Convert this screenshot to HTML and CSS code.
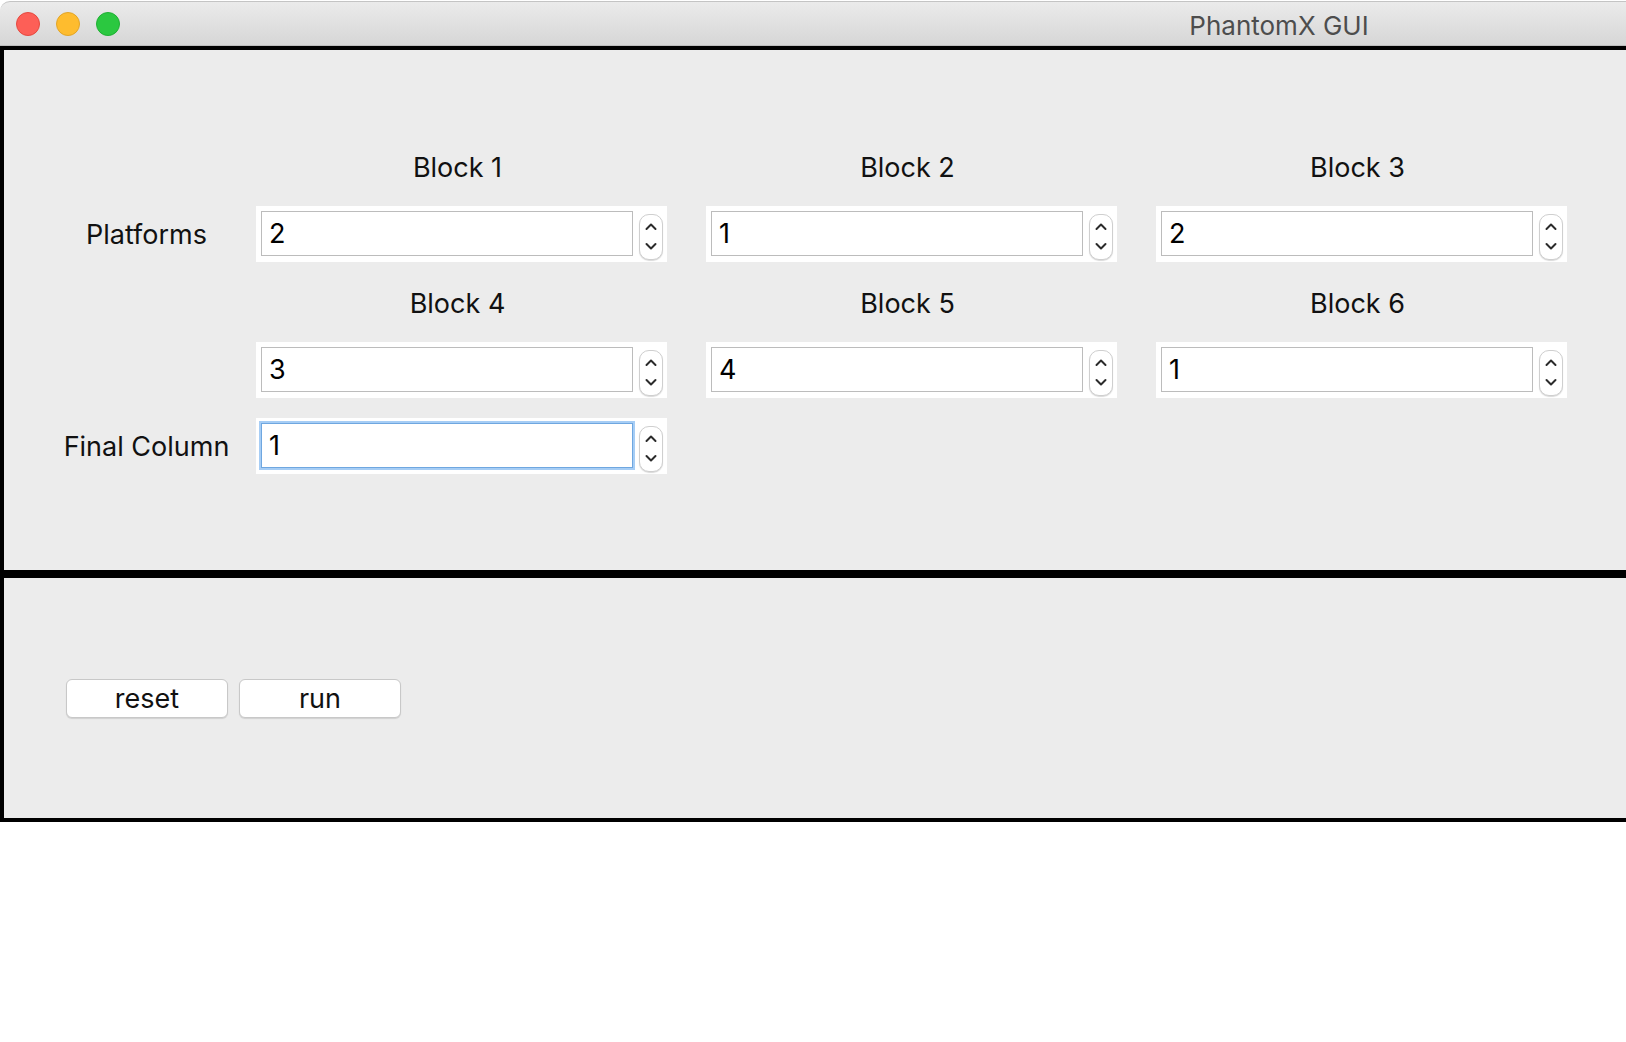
FILE: index.html
```html
<!DOCTYPE html>
<html>
<head>
<meta charset="utf-8">
<title>PhantomX GUI</title>
<link rel="stylesheet" href="styles.css">
</head>
<body>
<div class="window">
  <div class="titlebar">
    <div class="lights">
      <span class="light red"></span>
      <span class="light yellow"></span>
      <span class="light green"></span>
    </div>
    <div class="title">PhantomX GUI</div>
  </div>
  <div class="frame frame-top">
    <div class="grid">
      <div class="cell"></div>
      <div class="block-label">Block 1</div>
      <div class="block-label">Block 2</div>
      <div class="block-label">Block 3</div>

      <div class="row-label">Platforms</div>
      <div class="spin"><div class="field">2</div><div class="arrows"><svg width="24" height="46" viewBox="0 0 24 46"><path d="M7.5 15 L12 10.5 L16.5 15" /><path d="M7.5 30 L12 34.5 L16.5 30" /></svg></div></div>
      <div class="spin"><div class="field">1</div><div class="arrows"><svg width="24" height="46" viewBox="0 0 24 46"><path d="M7.5 15 L12 10.5 L16.5 15" /><path d="M7.5 30 L12 34.5 L16.5 30" /></svg></div></div>
      <div class="spin"><div class="field">2</div><div class="arrows"><svg width="24" height="46" viewBox="0 0 24 46"><path d="M7.5 15 L12 10.5 L16.5 15" /><path d="M7.5 30 L12 34.5 L16.5 30" /></svg></div></div>

      <div class="cell"></div>
      <div class="block-label">Block 4</div>
      <div class="block-label">Block 5</div>
      <div class="block-label">Block 6</div>

      <div class="cell"></div>
      <div class="spin"><div class="field">3</div><div class="arrows"><svg width="24" height="46" viewBox="0 0 24 46"><path d="M7.5 15 L12 10.5 L16.5 15" /><path d="M7.5 30 L12 34.5 L16.5 30" /></svg></div></div>
      <div class="spin"><div class="field">4</div><div class="arrows"><svg width="24" height="46" viewBox="0 0 24 46"><path d="M7.5 15 L12 10.5 L16.5 15" /><path d="M7.5 30 L12 34.5 L16.5 30" /></svg></div></div>
      <div class="spin"><div class="field">1</div><div class="arrows"><svg width="24" height="46" viewBox="0 0 24 46"><path d="M7.5 15 L12 10.5 L16.5 15" /><path d="M7.5 30 L12 34.5 L16.5 30" /></svg></div></div>

      <div class="spacer"></div>

      <div class="row-label">Final Column</div>
      <div class="spin"><div class="field focused">1</div><div class="arrows"><svg width="24" height="46" viewBox="0 0 24 46"><path d="M7.5 15 L12 10.5 L16.5 15" /><path d="M7.5 30 L12 34.5 L16.5 30" /></svg></div></div>
    </div>
  </div>
  <div class="frame frame-bottom">
    <div class="buttons">
      <button class="btn">reset</button>
      <button class="btn">run</button>
    </div>
  </div>
</div>
</body>
</html>
```

FILE: styles.css
```css
html, body {
  margin: 0;
  padding: 0;
  background: #ffffff;
  overflow: hidden;
  width: 1626px;
  height: 1042px;
}

.window {
  width: 2558px;
  margin-top: 1px;
  font-family: Inter, "Noto Sans", sans-serif;
  color: #111;
}

.titlebar {
  height: 43px;
  border-top: 1px solid #c4c4c4;
  border-bottom: 1px solid #bdbdbd;
  border-radius: 10px 10px 0 0;
  background: linear-gradient(#ebebeb, #d6d6d6);
  display: flex;
  align-items: center;
  position: relative;
}

.lights {
  display: flex;
  gap: 16px;
  padding-left: 16px;
}

.light {
  width: 24px;
  height: 24px;
  box-sizing: border-box;
  border-radius: 50%;
  display: block;
}
.red { background: #fd5f57; border: 1px solid #e5493f; }
.yellow { background: #febc2e; border: 1px solid #e2a527; }
.green { background: #2bc840; border: 1px solid #1fb033; }

.title {
  position: absolute;
  left: 0;
  right: 0;
  text-align: center;
  font-size: 26px;
  color: #4d4d4d;
  top: 8px;
}

.frame {
  border: 4px solid #000;
  background: #ececec;
}

.frame-top {
  height: 520px;
}

.frame-bottom {
  height: 240px;
}

.grid {
  display: grid;
  grid-template-columns: 213px 411px 411px 411px;
  grid-template-rows: 80px 56px 80px 56px 20px 56px;
  column-gap: 39px;
  padding-top: 76px;
}

.spacer {
  grid-column: 1 / -1;
}

.block-label,
.row-label {
  font-size: 27px;
  display: flex;
  align-items: center;
  justify-content: center;
  white-space: nowrap;
}

.row-label {
  padding-left: 72px;
}

.block-label {
  padding-top: 2px;
  padding-right: 8px;
}

.spin {
  background: #fff;
  display: flex;
  align-items: flex-start;
  padding: 5px 4px 0 5px;
  box-sizing: border-box;
  height: 56px;
}

.field {
  width: 372px;
  height: 45px;
  box-sizing: border-box;
  border: 1px solid #bcbcbc;
  background: #fff;
  font-size: 27px;
  display: flex;
  align-items: center;
  padding-left: 7px;
  color: #000;
}

.field.focused {
  border: 1px solid #6fa7e0;
  box-shadow: 0 0 0 2px #a6cdf5;
}

.arrows {
  margin-left: 6px;
  margin-top: 3px;
  width: 24px;
  height: 46px;
  box-sizing: border-box;
  border: 1px solid #cfcfcf;
  border-radius: 10px;
  background: #fff;
  box-shadow: 0 1px 1px rgba(0,0,0,0.15);
  overflow: hidden;
}

.arrows svg {
  display: block;
  margin: -1px 0 0 -1px;
}

.arrows path {
  fill: none;
  stroke: #2b2b2b;
  stroke-width: 2;
  stroke-linecap: round;
  stroke-linejoin: round;
}

.buttons {
  display: flex;
  gap: 11px;
  padding-top: 101px;
  padding-left: 62px;
}

.btn {
  width: 162px;
  height: 39px;
  background: #fff;
  border: 1px solid #c8c8c8;
  border-radius: 6px;
  box-shadow: 0 1px 1px rgba(0,0,0,0.12);
  font-family: Inter, "Noto Sans", sans-serif;
  font-size: 27px;
  color: #111;
  padding: 0;
  line-height: 37px;
}
```
